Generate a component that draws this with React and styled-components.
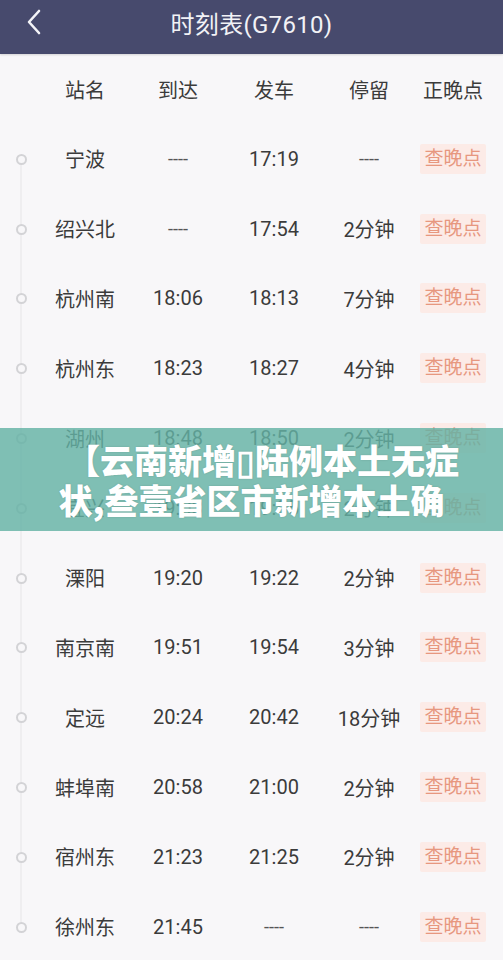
import styled, { createGlobalStyle } from "styled-components";

const Global = createGlobalStyle`
  html, body { margin: 0; padding: 0; background: #f8f7f9; }
  body { font-family: Roboto, "Noto Sans CJK SC", "Noto Sans", sans-serif; }
`;

const stops = [
  ["宁波", "----", "17:19", "----"],
  ["绍兴北", "----", "17:54", "2分钟"],
  ["杭州南", "18:06", "18:13", "7分钟"],
  ["杭州东", "18:23", "18:27", "4分钟"],
  ["湖州", "18:48", "18:50", "2分钟"],
  ["宜兴", "19:03", "19:05", "2分钟"],
  ["溧阳", "19:20", "19:22", "2分钟"],
  ["南京南", "19:51", "19:54", "3分钟"],
  ["定远", "20:24", "20:42", "18分钟"],
  ["蚌埠南", "20:58", "21:00", "2分钟"],
  ["宿州东", "21:23", "21:25", "2分钟"],
  ["徐州东", "21:45", "----", "----"],
];

const Page = styled.div`
  position: relative;
  width: 503px;
  height: 960px;
  overflow: hidden;
  background: #f8f7f9;
`;

const TopBar = styled.header`
  height: 54px;
  background: #474a6d;
  display: flex;
  align-items: center;
  justify-content: center;
  position: relative;
  box-shadow: 0 1px 2px rgba(0, 0, 0, 0.15);
`;

const Back = styled.button`
  position: absolute;
  left: 22px;
  top: 8px;
  width: 24px;
  height: 28px;
  padding: 0;
  border: 0;
  background: none;
  display: flex;
  align-items: center;
  justify-content: center;
`;

const Title = styled.h1`
  margin: 0 0 10px;
  color: #f2f2f6;
  font-size: 24px;
  font-weight: 400;
  letter-spacing: 0.3px;
`;

const Row = styled.div`
  display: grid;
  grid-template-columns: 42px 86px 100px 92px 98px 70px;
  height: ${(p) => (p.$head ? 70 : 69.8)}px;
  align-items: center;
  font-size: 20px;
  color: #3b3b3b;
  text-align: center;
`;

const Cell = styled.div`
  white-space: nowrap;
  color: ${(p) => (p.$dash ? "#555" : "inherit")};
  font-size: ${(p) => (p.$dash ? "18px" : "inherit")};
`;

const Rail = styled.div`
  position: relative;
  height: 100%;
  &::before {
    content: "";
    position: absolute;
    left: 20px;
    width: 2px;
    background: #efeef0;
    top: ${(p) => (p.$first ? "50%" : "0")};
    bottom: ${(p) => (p.$last ? "50%" : "0")};
  }
`;

const Dot = styled.span`
  position: absolute;
  left: 16px;
  top: 50%;
  margin-top: -5px;
  width: 7px;
  height: 7px;
  border-radius: 50%;
  border: 2px solid #d3d3d6;
  background: #f8f7f9;
`;

const LateButton = styled.span`
  display: inline-block;
  padding: 4px 4px;
  background: #fcebe7;
  color: #e7977f;
  font-size: 19px;
  line-height: 22px;
  border-radius: 2px;
`;

const Banner = styled.div`
  position: absolute;
  left: 0;
  right: 0;
  top: 428px;
  height: 103px;
  background: rgba(100, 178, 165, 0.82);
  display: flex;
  flex-direction: column;
  align-items: center;
  justify-content: center;
`;

const BannerLine = styled.div`
  color: #fff;
  font-family: "Noto Sans CJK SC", sans-serif;
  font-weight: 900;
  font-size: 34px;
  line-height: 40px;
  white-space: nowrap;
  text-shadow: 0 0 2px rgba(0, 0, 0, 0.15);
  margin-left: ${(p) => p.$shift || 0}px;
`;

const isDash = (v) => v === "----";

export default function App() {
  return (
    <Page>
      <Global />
      <TopBar>
        <Back aria-label="返回">
          <svg width="16" height="26" viewBox="0 0 16 26">
            <polyline points="13,2 3,13 13,24" fill="none" stroke="#f4f4f8" strokeWidth="2.6" strokeLinecap="round" strokeLinejoin="round" />
          </svg>
        </Back>
        <Title>时刻表(G7610)</Title>
      </TopBar>

      <Row $head>
        <div />
        <Cell>站名</Cell>
        <Cell>到达</Cell>
        <Cell>发车</Cell>
        <Cell>停留</Cell>
        <Cell>正晚点</Cell>
      </Row>

      {stops.map(([name, arr, dep, stay], i) => (
        <Row key={name}>
          <Rail $first={i === 0} $last={i === stops.length - 1}>
            <Dot />
          </Rail>
          <Cell>{name}</Cell>
          <Cell $dash={isDash(arr)}>{arr}</Cell>
          <Cell $dash={isDash(dep)}>{dep}</Cell>
          <Cell $dash={isDash(stay)}>{stay}</Cell>
          <Cell>
            <LateButton>查晚点</LateButton>
          </Cell>
        </Row>
      ))}

      <Banner>
        <BannerLine $shift={22}>【云南新增▯陆例本土无症</BannerLine>
        <BannerLine $shift={0}>状,叁壹省区市新增本土确</BannerLine>
      </Banner>
    </Page>
  );
}
